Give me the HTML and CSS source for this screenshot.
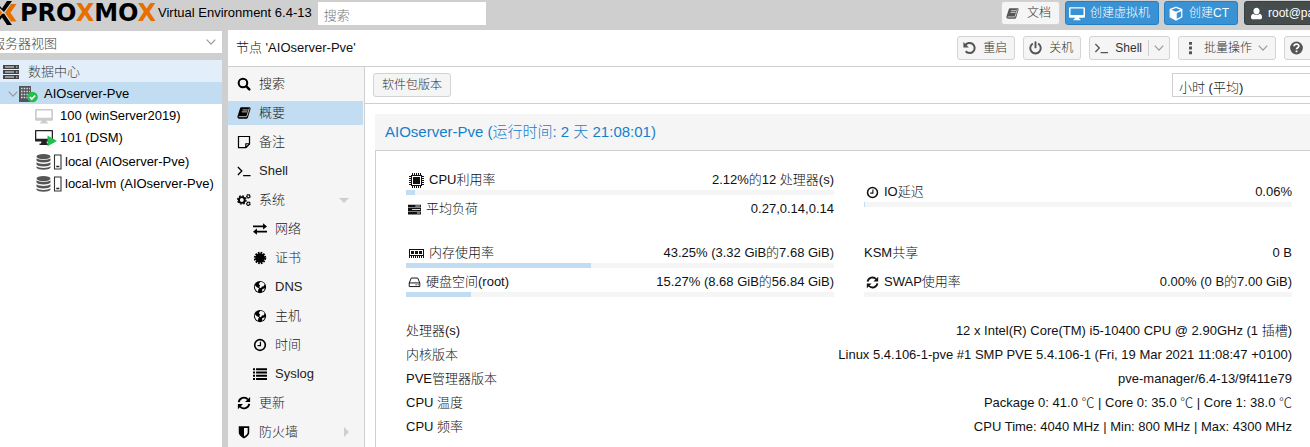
FILE: index.html
```html
<!DOCTYPE html>
<html lang="zh-CN">
<head>
<meta charset="utf-8">
<title>AIOserver-Pve - Proxmox Virtual Environment</title>
<link rel="stylesheet" href="styles.css">
</head>
<body>
<svg class="sprite" aria-hidden="true">
  <symbol id="book" viewBox="0 0 16 16"><path fill="currentColor" d="M5.2 1.5H14c1.3 0 1.8.8 1.4 2l-2.7 9c-.4 1.300-1.100 2-2.400 2H2.600C1.200 14.500.100 13.200.600 11.700L3.300 3.100C3.700 2 4.200 1.500 5.200 1.500z"/><path fill="none" stroke="#f5f5f5" stroke-width=".9" d="M6.300 4.500h6M5.600 6.700h6M2 12.200h8.200c.8 0 1-.3 1.200-1L14 2.800"/></symbol>
  <symbol id="monitor" viewBox="0 0 18 16"><path fill="currentColor" fill-rule="evenodd" d="M1.500 1h15c.8 0 1.500.6 1.500 1.400v9c0 .8-.7 1.400-1.500 1.400h-5.200l.5 1.500h1V15.500H5.200v-1.200h1l.5-1.500H1.500C.7 12.800 0 12.200 0 11.400v-9C0 1.600.7 1 1.500 1zM1.700 2.500v7.300h14.600V2.500z"/></symbol>
  <symbol id="cube" viewBox="0 0 16 16"><path fill="currentColor" fill-rule="evenodd" d="M8 .5l6.800 2.700v8.900L8 15.700l-6.800-3.600V3.200zM8 2L3 4l5 2 5-2zM8.800 13.700l4.700-2.500V5.600L8.800 7.500z"/></symbol>
  <symbol id="user" viewBox="0 0 16 16"><path fill="currentColor" d="M8 .8c2.200 0 3.800 1.700 3.800 4S10.200 9.200 8 9.200 4.200 7.100 4.200 4.800 5.800.8 8 .8zM4.400 8.200c1 1.200 2.200 1.700 3.600 1.700s2.600-.5 3.600-1.700c2.600.3 3.200 2.600 3.200 4.800 0 1.400-1 2.200-2.400 2.200H3.600c-1.400 0-2.400-.8-2.400-2.200 0-2.200.6-4.500 3.200-4.800z"/></symbol>
  <symbol id="undo" viewBox="0 0 16 16"><path fill="none" stroke="currentColor" stroke-width="2.300" d="M3 5.200A5.800 5.800 0 1 1 3.600 11.700"/><path fill="currentColor" d="M1 1v6.300h6.300z"/></symbol>
  <symbol id="power" viewBox="0 0 16 16"><path fill="none" stroke="currentColor" stroke-width="2.200" stroke-linecap="round" d="M4.300 3.500a6 6 0 1 0 7.400 0M8 1.300v6"/></symbol>
  <symbol id="prompt" viewBox="0 0 16 16"><path fill="none" stroke="currentColor" stroke-width="1.500" d="M1 3.500l4.500 4.500L1 12.500M7 13.200h8.500"/></symbol>
  <symbol id="dots" viewBox="0 0 16 16"><path fill="currentColor" d="M6.300 1h3.400v3.400H6.300zM6.300 6.300h3.400v3.400H6.300zM6.300 11.600h3.400V15H6.300z"/></symbol>
  <symbol id="help" viewBox="0 0 16 16"><circle cx="8" cy="8" r="7.300" fill="currentColor"/><path fill="none" stroke="#fff" stroke-width="2" d="M5.200 6c.2-3.300 5.600-3.200 5.500-.2C10.700 7.700 8 7.600 8 9.500M8 10.800v2"/></symbol>
  <symbol id="chevron" viewBox="0 0 10 10"><path fill="none" stroke="currentColor" stroke-width="1.200" d="M.7 2.700L5 7.200l4.300-4.500"/></symbol>
  <symbol id="search" viewBox="0 0 16 16"><circle cx="6.800" cy="6.800" r="4.900" fill="none" stroke="currentColor" stroke-width="2.300"/><path stroke="currentColor" stroke-width="2.800" stroke-linecap="round" d="M10.700 10.700l3.400 3.400"/></symbol>
  <symbol id="note" viewBox="0 0 16 16"><path fill="none" stroke="currentColor" stroke-width="1.400" d="M1.700 1.700h12.600v8.600l-4 4H1.700zM14.300 10h-4.200v4.300"/></symbol>
  <symbol id="gears" viewBox="0 0 16 16"><circle cx="5.500" cy="8" r="3.300" fill="none" stroke="currentColor" stroke-width="2.200"/><circle cx="5.500" cy="8" r="4.800" fill="none" stroke="currentColor" stroke-width="1.500" stroke-dasharray="2 1.770"/><circle cx="13" cy="3.700" r="1.800" fill="none" stroke="currentColor" stroke-width="1.700" stroke-dasharray="1.700 .3"/><circle cx="13" cy="12.300" r="1.800" fill="none" stroke="currentColor" stroke-width="1.700" stroke-dasharray="1.700 .3"/></symbol>
  <symbol id="exchange" viewBox="0 0 16 16"><path fill="currentColor" d="M0 4h11.500V1.500L16 5l-4.500 3.500V6H0zM16 10H4.500V7.500L0 11l4.500 3.500V12H16z"/></symbol>
  <symbol id="cert" viewBox="0 0 16 16"><circle cx="8" cy="8" r="5.500" fill="currentColor"/><circle cx="8" cy="8" r="6" fill="none" stroke="currentColor" stroke-width="2.200" stroke-dasharray="1.900 1.240"/></symbol>
  <symbol id="globe" viewBox="0 0 16 16"><circle cx="8" cy="8" r="7" fill="currentColor"/><path fill="#f5f5f5" d="M8.500 2l3 .8 1.800 1.700-1 2.500-2 .5L9 9.500l-1.800-1L8 6 6.500 4.500zM2 6l2.500 2.200L7 9.500 6 11l-.3 2.500C3.500 12.500 1.800 10 2 6zM10.500 10.500l3-1.200c-.5 2-1.500 3.200-3 4z"/></symbol>
  <symbol id="clock" viewBox="0 0 16 16"><circle cx="8" cy="8" r="6.100" fill="none" stroke="currentColor" stroke-width="1.900"/><path fill="none" stroke="currentColor" stroke-width="1.400" d="M8.500 4.200v4.500H5.200"/></symbol>
  <symbol id="list" viewBox="0 0 16 16"><path fill="currentColor" d="M0 1.500h2.300v2.200H0zM3.500 1.500H16v2.200H3.500zM0 5.200h2.300v2.200H0zM3.500 5.200H16v2.200H3.500zM0 8.900h2.300v2.200H0zM3.500 8.900H16v2.200H3.500zM0 12.600h2.300v2.200H0zM3.500 12.600H16v2.200H3.500z"/></symbol>
  <symbol id="refresh" viewBox="0 0 16 16"><path fill="none" stroke="currentColor" stroke-width="2.200" d="M2 7A6 6 0 0 1 12.500 4M14 9A6 6 0 0 1 3.500 12"/><path fill="currentColor" d="M15 1v5.800H9.200zM1 15V9.200h5.800z"/></symbol>
  <symbol id="shield" viewBox="0 0 16 16"><path fill="currentColor" fill-rule="evenodd" d="M2 1.500h12v7c0 3-2.700 5-6 6.800-3.300-1.800-6-3.800-6-6.800zM8 3.300v9.800c2.500-1.500 4.200-2.800 4.200-4.700V3.300z"/></symbol>
  <symbol id="chip" viewBox="0 0 15 15"><g shape-rendering="crispEdges"><path fill="none" stroke="currentColor" d="M2.500 2.500h10v10h-10z"/><path fill="currentColor" d="M4 4h7v7H4z"/><path stroke="currentColor" stroke-width="2" stroke-dasharray="1 1" d="M3 1h9M3 14h9M1 3v9M14 3v9"/></g></symbol>
  <symbol id="tasks" viewBox="0 0 16 16"><path fill="currentColor" d="M0 2h16v3.400H0zM0 6.300h16v3.400H0zM0 10.600h16V14H0z"/><path stroke="#ddd" stroke-width="1.200" d="M9 3.700h6M5 8h10M11 12.300h4"/></symbol>
  <symbol id="memory" viewBox="0 0 15 15"><g shape-rendering="crispEdges"><path fill="none" stroke="currentColor" d="M.5 3.500h14v6H.5z"/><path fill="currentColor" d="M2 5h3v3H2zM6 5h3v3H6zM10 5h3v3h-3z"/><path stroke="currentColor" stroke-width="2" stroke-dasharray="1 1" d="M0 11h15"/></g></symbol>
  <symbol id="hdd" viewBox="0 0 16 16"><path fill="none" stroke="currentColor" stroke-width="1.200" d="M1.500 8.500L4 2.500h8l2.500 6v4.500h-13zM1.500 8.500h13M9.300 10.800h1.400M12 10.800h1.200"/></symbol>
  <symbol id="servers" viewBox="0 0 18 16"><path fill="currentColor" d="M1 1h16v4H1zM1 6h16v4H1zM1 11h16v4H1z"/><path stroke="#e2eef9" stroke-width="1.100" d="M3 3h9M3 8h9M3 13h9M14 3h1.500M14 8h1.500M14 13h1.500"/></symbol>
  <symbol id="node" viewBox="0 0 20 18"><path fill="#555" d="M1 1h12v16H1z"/><path stroke="#d2e2f0" stroke-width="1.500" stroke-dasharray="1.500 1.200" d="M3 3.500h9M3 6.500h9M3 9.500h9M3 12.500h9"/><circle cx="14.500" cy="12" r="5.300" fill="#23bf4e"/><path fill="none" stroke="#fff" stroke-width="1.700" d="M11.900 12l1.900 2 3.300-3.500"/></symbol>
  <symbol id="vm-on" viewBox="0 0 22 18"><path fill="#222" fill-rule="evenodd" d="M1 1h16c.6 0 1 .4 1 1v9.500c0 .6-.4 1-1 1h-5.500L12 14.500h1.500V16h-9v-1.500H6l.5-2H1c-.6 0-1-.4-1-1V2c0-.6.400-1 1-1zM1.300 2.300v7.500h15.400V2.300z"/><path fill="#23bf4e" d="M12.500 6.500v10.800l9.500-5.400z"/></symbol>
  <symbol id="storage" viewBox="0 0 26 18"><g fill="#555"><ellipse cx="7.500" cy="3.600" rx="7" ry="2.600"/><path d="M.5 5.300c2.500 2.200 11.500 2.200 14 0v2.200c-1 2.500-13 2.500-14 0zM.5 9.300c2.500 2.200 11.500 2.200 14 0v2.200c-1 2.500-13 2.500-14 0zM.5 13.300c2.500 2.200 11.500 2.200 14 0v1.500c-1 2.500-13 2.500-14 0z"/></g><path fill="#fff" stroke="#333" stroke-width="1.100" d="M18.500 2h6.500v14h-6.500z"/><path stroke="#222" stroke-width="1.500" d="M20.300 13.500h3"/></symbol>
</svg>

<header class="topbar">
  <svg class="logo-mark" viewBox="0 0 17 26" aria-hidden="true"><path d="M-8 1L-4 1 2 8.500 7 1h5L4 12zM-8 25L2 14l2-.500 8 11.500H7L2 17.500-4 25z"/><path fill="#e57000" d="M16.500 4H11L5 12.800l6 8.700h5.500l-6-8.700zM0 10l2.200 2.800L0 15.500z"/></svg>
  <span class="logo-text">PRO<i>X</i>MO<i>X</i></span>
  <span class="version">Virtual Environment 6.4-13</span>
  <input class="global-search" type="text" placeholder="搜索" aria-label="搜索">
  <div class="top-actions">
    <button class="btn" type="button"><svg class="icon"><use href="#book"/></svg>文档</button>
    <button class="btn btn-blue" type="button"><svg class="icon"><use href="#monitor"/></svg>创建虚拟机</button>
    <button class="btn btn-blue" type="button"><svg class="icon"><use href="#cube"/></svg>创建CT</button>
    <button class="btn btn-dark" type="button"><svg class="icon"><use href="#user"/></svg>root@pam</button>
  </div>
</header>

<div class="workspace">
  <aside class="sidebar">
    <div class="view-picker">
      <select aria-label="视图"><option>服务器视图</option></select>
      <svg class="chevron"><use href="#chevron"/></svg>
    </div>
    <ul class="tree">
      <li class="root"><svg class="tree-icon"><use href="#servers"/></svg>数据中心</li>
      <li class="host"><svg class="chevron"><use href="#chevron"/></svg><svg class="tree-icon host-icon"><use href="#node"/></svg>AIOserver-Pve</li>
      <li class="guest"><svg class="guest-icon off"><use href="#monitor"/></svg>100 (winServer2019)</li>
      <li class="guest"><svg class="guest-icon"><use href="#vm-on"/></svg>101 (DSM)</li>
      <li class="store"><svg class="store-icon"><use href="#storage"/></svg>local (AIOserver-Pve)</li>
      <li class="store"><svg class="store-icon"><use href="#storage"/></svg>local-lvm (AIOserver-Pve)</li>
    </ul>
  </aside>

  <main class="content">
    <div class="node-bar">
      <h1>节点 'AIOserver-Pve'</h1>
      <div class="node-actions">
        <button class="btn" type="button"><svg class="icon"><use href="#undo"/></svg>重启</button>
        <button class="btn" type="button"><svg class="icon"><use href="#power"/></svg>关机</button>
        <button class="btn split" type="button"><svg class="icon"><use href="#prompt"/></svg>Shell<span class="split-arrow"><svg class="chevron"><use href="#chevron"/></svg></span></button>
        <button class="btn" type="button"><svg class="icon"><use href="#dots"/></svg>批量操作<svg class="chevron"><use href="#chevron"/></svg></button>
        <button class="btn" type="button"><svg class="icon"><use href="#help"/></svg>帮助</button>
      </div>
    </div>
    <div class="node-body">
      <nav class="menu">
        <a href="#search"><svg class="icon"><use href="#search"/></svg>搜索</a>
        <a href="#summary" class="active"><svg class="icon"><use href="#book"/></svg>概要</a>
        <a href="#notes"><svg class="icon"><use href="#note"/></svg>备注</a>
        <a href="#shell"><svg class="icon"><use href="#prompt"/></svg>Shell</a>
        <a href="#system"><svg class="icon"><use href="#gears"/></svg>系统<span class="caret down"></span></a>
        <a href="#network" class="sub"><svg class="icon"><use href="#exchange"/></svg>网络</a>
        <a href="#certs" class="sub"><svg class="icon"><use href="#cert"/></svg>证书</a>
        <a href="#dns" class="sub"><svg class="icon"><use href="#globe"/></svg>DNS</a>
        <a href="#hosts" class="sub"><svg class="icon"><use href="#globe"/></svg>主机</a>
        <a href="#time" class="sub"><svg class="icon"><use href="#clock"/></svg>时间</a>
        <a href="#syslog" class="sub"><svg class="icon"><use href="#list"/></svg>Syslog</a>
        <a href="#updates"><svg class="icon"><use href="#refresh"/></svg>更新</a>
        <a href="#firewall"><svg class="icon"><use href="#shield"/></svg>防火墙<span class="caret right"></span></a>
      </nav>
      <section class="summary">
        <div class="summary-bar">
          <button class="btn" type="button">软件包版本</button>
          <select class="period" aria-label="时间范围"><option>小时 (平均)</option></select>
        </div>
        <div class="panel">
          <h2>AIOserver-Pve (运行时间: 2 天 21:08:01)</h2>
          <div class="panel-body">
            <div class="stats">
              <div class="group">
                <div class="stat"><div class="line"><span><svg class="icon big"><use href="#chip"/></svg>CPU利用率</span><span>2.12%的12 处理器(s)</span></div><div class="bar"><div class="fill" style="width:2.12%"></div></div></div>
                <div class="stat"><div class="line"><span><svg class="icon"><use href="#tasks"/></svg>平均负荷</span><span>0.27,0.14,0.14</span></div></div>
              </div>
              <div class="group lowered">
                <div class="stat"><div class="line"><span><svg class="icon"><use href="#clock"/></svg>IO延迟</span><span>0.06%</span></div><div class="bar"><div class="fill" style="width:0.06%"></div></div></div>
              </div>
              <div class="group">
                <div class="stat"><div class="line"><span><svg class="icon big"><use href="#memory"/></svg>内存使用率</span><span>43.25% (3.32 GiB的7.68 GiB)</span></div><div class="bar"><div class="fill" style="width:43.25%"></div></div></div>
                <div class="stat"><div class="line"><span><svg class="icon"><use href="#hdd"/></svg>硬盘空间(root)</span><span>15.27% (8.68 GiB的56.84 GiB)</span></div><div class="bar"><div class="fill" style="width:15.27%"></div></div></div>
              </div>
              <div class="group">
                <div class="stat"><div class="line"><span>KSM共享</span><span>0 B</span></div></div>
                <div class="stat"><div class="line"><span><svg class="icon"><use href="#refresh"/></svg>SWAP使用率</span><span>0.00% (0 B的7.00 GiB)</span></div><div class="bar"></div></div>
              </div>
            </div>
            <dl class="facts">
              <div><dt>处理器(s)</dt><dd>12 x Intel(R) Core(TM) i5-10400 CPU @ 2.90GHz (1 插槽)</dd></div>
              <div><dt>内核版本</dt><dd>Linux 5.4.106-1-pve #1 SMP PVE 5.4.106-1 (Fri, 19 Mar 2021 11:08:47 +0100)</dd></div>
              <div><dt>PVE管理器版本</dt><dd>pve-manager/6.4-13/9f411e79</dd></div>
              <div><dt>CPU 温度</dt><dd>Package 0: 41.0 ℃ | Core 0: 35.0 ℃ | Core 1: 38.0 ℃</dd></div>
              <div><dt>CPU 频率</dt><dd>CPU Time: 4040 MHz | Min: 800 MHz | Max: 4300 MHz</dd></div>
            </dl>
          </div>
        </div>
      </section>
    </div>
  </main>
</div>
</body>
</html>
```
FILE: styles.css
```css
* { box-sizing: border-box; }

body {
  margin: 0;
  height: 100vh;
  display: flex;
  flex-direction: column;
  overflow: hidden;
  background: #cfcfcf;
  color: #000;
  font: 300 13px/20px "Liberation Sans", "Noto Sans CJK SC", sans-serif;
}

button, input, select { font: inherit; color: inherit; }

.sprite { position: absolute; width: 0; height: 0; }

.icon { width: 13px; height: 13px; flex: none; }
.icon.big { width: 15px; height: 15px; }
.chevron { width: 10px; height: 10px; flex: none; color: #999; }

.btn {
  display: flex;
  align-items: center;
  gap: 8px;
  height: 24px;
  padding: 0 8px;
  border: 1px solid #d3d3d3;
  border-radius: 3px;
  background: #f5f5f5;
  color: #333;
  font-size: 12px;
  line-height: 16px;
  white-space: nowrap;
  flex: none;
}
.btn .icon { color: #555; }
.top-actions .btn { padding: 0 8px 0 4px; }
.top-actions .btn-blue { background: #3892d4; border-color: #2480c4; color: #fff; gap: 5px; padding: 0 8px 0 3px; }
.top-actions .btn-dark { background: #464d4d; border-color: #3a4040; color: #fff; gap: 5px; padding-left: 5px; min-width: 120px; margin-left: 1px; }
.btn-blue .icon, .btn-dark .icon { color: #fff; }
.btn-blue .icon { width: 16px; height: 15px; }

/* top bar */
.topbar { display: flex; align-items: center; height: 30px; padding-bottom: 4px; flex: none; }
.logo-mark { width: 17px; height: 26px; flex: none; margin-right: 3px; }
.logo-text { font: 700 24px/26px "DejaVu Sans", sans-serif; width: 138px; }
.logo-text i { font-style: normal; color: #e57000; }
.version { white-space: nowrap; }
.global-search { width: 168px; height: 23px; margin-left: 6px; padding: 4px 6px 0; border: 0; border-radius: 0; background: #fff; }
.global-search::placeholder { color: #777; }
.top-actions { display: flex; gap: 5px; margin-left: auto; margin-right: -54px; }

.workspace { display: flex; gap: 6px; flex: 1; min-height: 0; }

/* resource tree */
.sidebar { width: 222px; flex: none; display: flex; flex-direction: column; gap: 7px; padding-top: 1px; }
.view-picker { display: flex; align-items: center; height: 22px; padding-right: 6px; background: #fff; overflow: hidden; }
.view-picker select { flex: 1; appearance: none; border: 0; padding: 4px 0 0; margin-left: -8px; background: none; color: #444; }
.tree { flex: 1; margin: 0; padding: 0; list-style: none; background: #fff; }
.tree li { display: flex; align-items: center; height: 22px; padding-top: 2px; white-space: nowrap; }
.tree .root { background: #e2eef9; padding-left: 2px; gap: 8px; color: #444; }
.tree .host { background: #c2ddf2; padding-left: 8px; }
.tree .guest { padding-left: 35px; gap: 3px; }
.tree .store { padding-left: 36px; padding-top: 5px; gap: 3px; }
.tree-icon { width: 18px; height: 16px; color: #444; }
.host-icon { width: 20px; height: 18px; margin-right: 6px; }
.guest-icon { width: 22px; height: 18px; }
.guest-icon.off { color: #ccc; width: 18px; height: 16px; margin-right: 4px; }
.store-icon { width: 26px; height: 18px; }

/* node panel */
.content { flex: 1; min-width: 0; display: flex; flex-direction: column; background: #fff; }
.node-bar { display: flex; align-items: center; height: 37px; padding-left: 8px; border-bottom: 1px solid #cfcfcf; flex: none; }
.node-bar h1 { margin: 0; font: inherit; color: #111; }
.node-actions { display: flex; gap: 8px; margin-left: auto; margin-right: -32px; }
.node-actions .btn { padding: 0 7px 0 4px; gap: 6px; }
.node-actions .split { padding-right: 5px; }
.node-actions .icon { width: 15px; height: 14px; }
.split-arrow { display: flex; align-items: center; height: 16px; padding-left: 5px; border-left: 1px solid #cfcfcf; }

.node-body { flex: 1; display: flex; min-height: 0; }
.menu { width: 137px; flex: none; display: flex; flex-direction: column; gap: 5px; padding: 5px 1px 0 0; background: #f5f5f5; border-right: 1px solid #cfcfcf; overflow: hidden; }
.menu a { display: flex; align-items: center; gap: 8px; height: 24px; flex: none; padding: 0 14px 0 9px; color: #222; text-decoration: none; }
.menu a.sub { padding-left: 25px; }
.menu .icon { width: 14px; height: 14px; color: #000; }
.menu a.active { background: #c2ddf2; }
.caret { margin-left: auto; border: 5px solid transparent; }
.caret.down { border-top-color: #cfcfcf; border-bottom: 0; }
.caret.right { border-left-color: #cfcfcf; border-right: 0; }

.summary { flex: 1; min-width: 0; display: flex; flex-direction: column; }
.summary-bar { display: flex; justify-content: space-between; align-items: center; height: 37px; padding-left: 8px; border-bottom: 1px solid #cfcfcf; flex: none; }
.period { appearance: none; width: 160px; height: 24px; margin-right: -22px; padding: 4px 6px 0; border: 1px solid #cfcfcf; border-radius: 0; background: #fff; color: #222; }

.panel { flex: 1; display: flex; flex-direction: column; margin: 10px 0 0 10px; }
.panel h2 { margin: 0; padding: 8px 10px; background: #f5f5f5; color: #157fcc; font-size: 15px; line-height: 20px; font-weight: 300; }
.panel-body { flex: 1; padding: 19px 18px 0 30px; border: solid #cfcfcf; border-width: 1px 0 0 1px; color: #111; }
.stats { display: grid; grid-template-columns: 1fr 1fr; gap: 19px 30px; }
.group { display: flex; flex-direction: column; gap: 4px; }
.group.lowered { padding-top: 12px; }
.stat { height: 25px; }
.line { display: flex; justify-content: space-between; white-space: nowrap; }
.line span { display: flex; align-items: center; }
.line .icon { margin: 0 5px 0 2px; }
.line .icon.big { margin-left: 3px; }
.bar { height: 5px; background: #f5f5f5; }
.fill { height: 100%; min-width: 1px; background: #c2ddf2; }

.facts { margin: 22px 0 0; }
.facts div { display: flex; justify-content: space-between; line-height: 24px; white-space: nowrap; }
.facts dd { margin: 0; }
```
